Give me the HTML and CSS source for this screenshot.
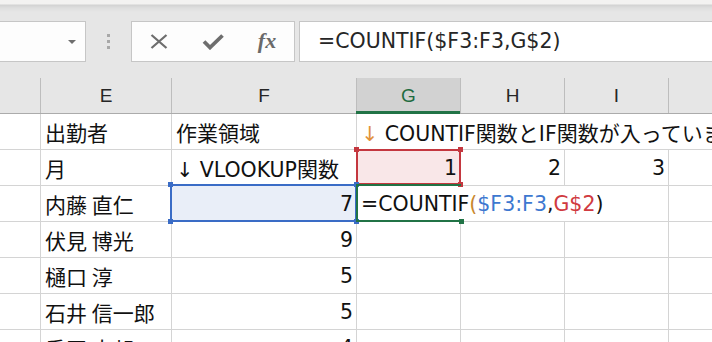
FILE: index.html
```html
<!DOCTYPE html>
<html lang="ja">
<head>
<meta charset="utf-8">
<title>Excel COUNTIF</title>
<link rel="stylesheet" href="styles.css">
</head>
<body>
<div class="app">
  <div class="topband"></div>
  <div class="fbar">
    <div class="namebox"><span class="caret"></span></div>
    <div class="grip"><i></i><i></i><i></i></div>
    <div class="btns">
      <span class="btn">
        <svg width="18" height="15" viewBox="0 0 18 15"><path d="M1.5 1 L16.5 14 M16.5 1 L1.5 14" stroke="#6e6e6e" stroke-width="2.3" fill="none"/></svg>
      </span>
      <span class="btn">
        <svg width="22" height="16" viewBox="0 0 22 16"><path d="M2 7.5 L8 13.5 L20.5 1.5" stroke="#6e6e6e" stroke-width="3.8" fill="none"/></svg>
      </span>
      <span class="btn fx">fx</span>
    </div>
    <div class="formula"><span class="lat">=COUNTIF($F3:F3,G$2)</span></div>
  </div>

  <div class="sheet">
    <div class="row hdr">
      <div class="c cd"></div>
      <div class="c ce">E</div>
      <div class="c cf">F</div>
      <div class="c cg on">G</div>
      <div class="c ch">H</div>
      <div class="c ci">I</div>
      <div class="c cj"></div>
    </div>

    <div class="row">
      <div class="c cd"></div>
      <div class="c ce"><span class="t">出勤者</span></div>
      <div class="c cf"><span class="t">作業領域</span></div>
      <div class="c cg nob"><span class="t"><span class="lat arrow-o">↓</span><span class="lat"> COUNTIF</span>関数と<span class="lat">IF</span>関数が入っています</span></div>
      <div class="c ch nob"></div>
      <div class="c ci nob"></div>
      <div class="c cj"></div>
    </div>

    <div class="row">
      <div class="c cd"></div>
      <div class="c ce"><span class="t">月</span></div>
      <div class="c cf"><span class="t"><span class="lat">↓ VLOOKUP</span>関数</span></div>
      <div class="c cg num selr"><span class="sel red"><i class="h tl"></i><i class="h tr"></i><i class="h bl"></i><i class="h br"></i></span><span class="t lat">1</span></div>
      <div class="c ch num"><span class="t lat">2</span></div>
      <div class="c ci num"><span class="t lat">3</span></div>
      <div class="c cj"></div>
    </div>

    <div class="row">
      <div class="c cd"></div>
      <div class="c ce"><span class="t">内藤 直仁</span></div>
      <div class="c cf num selb"><span class="sel blue"><i class="h tl"></i><i class="h tr"></i><i class="h bl"></i><i class="h br"></i></span><span class="t lat">7</span></div>
      <div class="c cg nob edit"><span class="sel green"><i class="h br"></i></span><span class="t lat">=COUNTIF<span class="po">(</span><span class="rb">$F3:F3</span>,<span class="rr">G$2</span>)</span></div>
      <div class="c ch nob"></div>
      <div class="c ci"></div>
      <div class="c cj"></div>
    </div>

    <div class="row">
      <div class="c cd"></div>
      <div class="c ce"><span class="t">伏見 博光</span></div>
      <div class="c cf num"><span class="t lat">9</span></div>
      <div class="c cg"></div>
      <div class="c ch"></div>
      <div class="c ci"></div>
      <div class="c cj"></div>
    </div>

    <div class="row">
      <div class="c cd"></div>
      <div class="c ce"><span class="t">樋口 淳</span></div>
      <div class="c cf num"><span class="t lat">5</span></div>
      <div class="c cg"></div>
      <div class="c ch"></div>
      <div class="c ci"></div>
      <div class="c cj"></div>
    </div>

    <div class="row">
      <div class="c cd"></div>
      <div class="c ce"><span class="t">石井 信一郎</span></div>
      <div class="c cf num"><span class="t lat">5</span></div>
      <div class="c cg"></div>
      <div class="c ch"></div>
      <div class="c ci"></div>
      <div class="c cj"></div>
    </div>

    <div class="row">
      <div class="c cd"></div>
      <div class="c ce"><span class="t">香田 太郎</span></div>
      <div class="c cf num"><span class="t lat">4</span></div>
      <div class="c cg"></div>
      <div class="c ch"></div>
      <div class="c ci"></div>
      <div class="c cj"></div>
    </div>
  </div>
</div>
</body>
</html>
```

FILE: styles.css
```css
html, body {
  margin: 0;
  padding: 0;
  width: 712px;
  height: 342px;
  overflow: hidden;
  background: #e6e6e6;
}

.app {
  width: 712px;
  height: 342px;
  overflow: hidden;
  background: #e6e6e6;
}

.topband {
  height: 21px;
  background: linear-gradient(#f3f2f1 0, #f3f2f1 4px, #d2d2d2 5px, #dedede 8px, #e6e6e6 12px);
}

.fbar {
  display: flex;
  height: 41px;
  align-items: stretch;
}

.namebox {
  box-sizing: border-box;
  width: 87px;
  margin-left: -1px;
  border: 1px solid #c6c6c6;
  background: #fdfdfd;
  display: flex;
  align-items: center;
  justify-content: flex-end;
  padding-right: 9px;
}

.caret {
  width: 0;
  height: 0;
  border-left: 4px solid transparent;
  border-right: 4px solid transparent;
  border-top: 4px solid #6e6e6e;
}

.grip {
  width: 45px;
  display: flex;
  flex-direction: column;
  align-items: center;
  justify-content: center;
  gap: 3px;
}

.grip i {
  display: block;
  width: 3px;
  height: 3px;
  background: #a8a8a8;
}

.btns {
  box-sizing: border-box;
  width: 164px;
  border: 1px solid #c6c6c6;
  background: #fdfdfd;
  display: flex;
  align-items: center;
}

.btn {
  width: 54px;
  display: flex;
  align-items: center;
  justify-content: center;
  height: 100%;
}

.btn.fx {
  font-family: "Liberation Serif", "DejaVu Serif", serif;
  font-style: italic;
  font-weight: bold;
  font-size: 22px;
  color: #6a6a6a;
  padding-bottom: 2px;
  box-sizing: border-box;
}

.formula {
  flex: 1;
  margin-left: 4px;
  margin-right: -4px;
  box-sizing: border-box;
  border: 1px solid #c6c6c6;
  background: #ffffff;
  display: flex;
  align-items: center;
  padding-left: 18px;
  padding-bottom: 1px;
  font-family: "DejaVu Sans", "Noto Sans CJK JP", sans-serif;
  color: #262626;
  white-space: nowrap;
}

.lat {
  font-family: "DejaVu Sans", "Noto Sans CJK JP", sans-serif;
  font-size: 20.5px;
}

.sheet {
  margin-top: 16px;
  background: #ffffff;
}

.row {
  display: flex;
  height: 36px;
  box-sizing: border-box;
  border-bottom: 1px solid #d4d4d4;
  background: #ffffff;
}

.row.hdr {
  background: #e6e6e6;
  border-bottom: 1px solid #ababab;
}

.c {
  box-sizing: border-box;
  flex: none;
  border-right: 1px solid #d4d4d4;
  display: flex;
  align-items: center;
  padding: 0 4px;
  white-space: nowrap;
  font-family: "Noto Sans CJK JP", sans-serif;
  font-size: 21px;
  color: #111111;
  position: relative;
}

.t {
  white-space: pre;
}

.hdr .c {
  border-right: 1px solid #bdbdbd;
  justify-content: center;
  font-family: "Liberation Sans", "Noto Sans", sans-serif;
  font-size: 19px;
  color: #262626;
  padding: 0;
}

.hdr .c.on {
  background: #d2d2d2;
  color: #1f6b40;
}

.hdr .c.on::after {
  content: "";
  position: absolute;
  left: -1px;
  right: 0;
  bottom: -1px;
  height: 3px;
  background: #217346;
}

.cd { width: 41px; }
.ce { width: 131px; }
.cf { width: 185px; }
.cg { width: 104px; }
.ch { width: 104px; }
.ci { width: 104px; }
.cj { flex: 1; min-width: 60px; }

.nob { border-right-color: transparent; }

.num { justify-content: flex-end; padding-right: 3px; }

.arrow-o { color: #e2923a; }

.selr { background: #f9e7e8; }
.selb { background: #e9eef8; }

.sel {
  position: absolute;
  box-sizing: border-box;
  pointer-events: none;
  z-index: 2;
}

.sel.red {
  left: -1px;
  top: -1px;
  width: 105px;
  height: 36px;
  border: 2px solid #c4373f;
}

.sel.blue {
  left: -2px;
  top: -2px;
  right: -1px;
  bottom: -1px;
  border: 2px solid #3a6cc6;
}

.sel.green {
  left: -1px;
  top: -2px;
  width: 105px;
  bottom: -1px;
  border: 2px solid #217346;
  border-right: none;
  z-index: 1;
}

.h {
  position: absolute;
  width: 5px;
  height: 5px;
}

.red .h { background: #c4373f; }
.blue .h { background: #3a6cc6; }
.green .h { background: #217346; }

.h.tl { left: -4px; top: -4px; }
.h.tr { right: -4px; top: -4px; }
.h.bl { left: -4px; bottom: -4px; }
.h.br { right: -4px; bottom: -4px; }

.green .h.br { right: -3px; bottom: -4px; }

.edit { z-index: 3; overflow: visible; }

.po { color: #c9872e; }
.rb { color: #3d78d0; }
.rr { color: #d03a40; }
```
